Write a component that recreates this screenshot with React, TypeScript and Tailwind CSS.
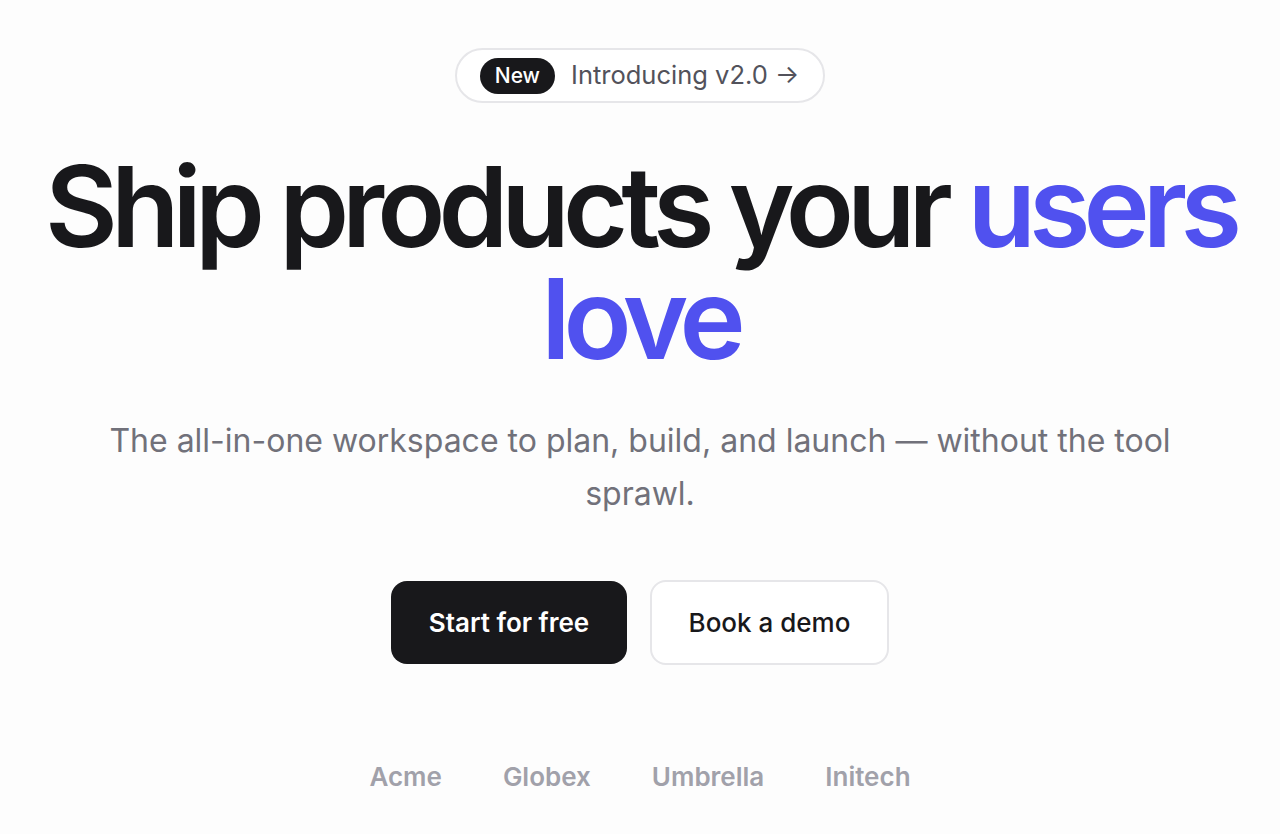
import React from 'react';

const logos = ['Acme', 'Globex', 'Umbrella', 'Initech'];

const App: React.FC = () => {
  return (
    <div
      className="min-h-[834px] w-full bg-[#fdfdfd] text-[#18181b] flex flex-col items-center pt-[48px]"
      style={{ fontFamily: 'Inter, "Noto Sans", sans-serif' }}
    >
      {/* Announcement badge */}
      <a className="flex items-center gap-[16px] h-[55px] pl-[23px] pr-[24px] rounded-full border-2 border-[#e6e6e9] bg-white">
        <span className="bg-[#18181b] text-white text-[21px] font-medium rounded-full h-[36px] px-[15px] flex items-center">
          New
        </span>
        <span className="text-[25.5px] text-[#52525b]">Introducing v2.0 →</span>
      </a>

      {/* Headline */}
      <h1 className="mt-[47px] text-center text-[112px] leading-[112px] font-semibold tracking-[-0.062em]">
        Ship products your <span className="text-[#5051ef]">users</span>
        <br />
        <span className="text-[#5051ef]">love</span>
      </h1>

      {/* Subtitle */}
      <p className="mt-[40px] max-w-[1110px] text-center text-[32px] leading-[53px] text-[#71717a]">
        The all-in-one workspace to plan, build, and launch — without the tool sprawl.
      </p>

      {/* Actions */}
      <div className="mt-[61px] flex gap-[23px]">
        <button className="h-[83px] w-[236px] rounded-[16px] bg-[#18181b] text-white text-[26px] font-semibold">
          Start for free
        </button>
        <button className="h-[85px] w-[239px] -mt-[1px] rounded-[16px] border-2 border-[#e6e6e9] bg-white text-[#18181b] text-[26px] font-medium">
          Book a demo
        </button>
      </div>

      {/* Logos */}
      <div className="mt-[92px] flex gap-[61px] text-[26px] font-semibold text-[#a1a1aa]">
        {logos.map((name) => (
          <span key={name}>{name}</span>
        ))}
      </div>
    </div>
  );
};

export default App;
